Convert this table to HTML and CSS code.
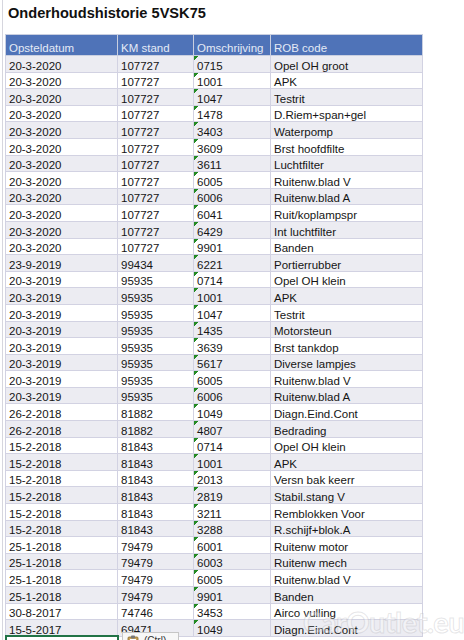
FILE: index.html
```html
<!DOCTYPE html>
<html lang="nl">
<head>
<meta charset="utf-8">
<title>Onderhoudshistorie 5VSK75</title>
<link rel="stylesheet" href="styles.css">
</head>
<body>
<div class="sheet">
  <h1 class="title">Onderhoudshistorie 5VSK75</h1>
  <table class="grid">
    <colgroup><col class="c1"><col class="c2"><col class="c3"><col class="c4"></colgroup>
    <thead>
      <tr class="head"><th>Opsteldatum</th><th>KM stand</th><th>Omschrijving</th><th>ROB code</th></tr>
    </thead>
    <tbody>
      <tr><td>20-3-2020</td><td>107727</td><td class="tx">0715</td><td>Opel OH groot</td></tr>
      <tr><td>20-3-2020</td><td>107727</td><td class="tx">1001</td><td>APK</td></tr>
      <tr><td>20-3-2020</td><td>107727</td><td class="tx">1047</td><td>Testrit</td></tr>
      <tr><td>20-3-2020</td><td>107727</td><td class="tx">1478</td><td>D.Riem+span+gel</td></tr>
      <tr><td>20-3-2020</td><td>107727</td><td class="tx">3403</td><td>Waterpomp</td></tr>
      <tr><td>20-3-2020</td><td>107727</td><td class="tx">3609</td><td>Brst hoofdfilte</td></tr>
      <tr><td>20-3-2020</td><td>107727</td><td class="tx">3611</td><td>Luchtfilter</td></tr>
      <tr><td>20-3-2020</td><td>107727</td><td class="tx">6005</td><td>Ruitenw.blad V</td></tr>
      <tr><td>20-3-2020</td><td>107727</td><td class="tx">6006</td><td>Ruitenw.blad A</td></tr>
      <tr><td>20-3-2020</td><td>107727</td><td class="tx">6041</td><td>Ruit/koplampspr</td></tr>
      <tr><td>20-3-2020</td><td>107727</td><td class="tx">6429</td><td>Int luchtfilter</td></tr>
      <tr><td>20-3-2020</td><td>107727</td><td class="tx">9901</td><td>Banden</td></tr>
      <tr><td>23-9-2019</td><td>99434</td><td class="tx">6221</td><td>Portierrubber</td></tr>
      <tr><td>20-3-2019</td><td>95935</td><td class="tx">0714</td><td>Opel OH klein</td></tr>
      <tr><td>20-3-2019</td><td>95935</td><td class="tx">1001</td><td>APK</td></tr>
      <tr><td>20-3-2019</td><td>95935</td><td class="tx">1047</td><td>Testrit</td></tr>
      <tr><td>20-3-2019</td><td>95935</td><td class="tx">1435</td><td>Motorsteun</td></tr>
      <tr><td>20-3-2019</td><td>95935</td><td class="tx">3639</td><td>Brst tankdop</td></tr>
      <tr><td>20-3-2019</td><td>95935</td><td class="tx">5617</td><td>Diverse lampjes</td></tr>
      <tr><td>20-3-2019</td><td>95935</td><td class="tx">6005</td><td>Ruitenw.blad V</td></tr>
      <tr><td>20-3-2019</td><td>95935</td><td class="tx">6006</td><td>Ruitenw.blad A</td></tr>
      <tr><td>26-2-2018</td><td>81882</td><td class="tx">1049</td><td>Diagn.Eind.Cont</td></tr>
      <tr><td>26-2-2018</td><td>81882</td><td class="tx">4807</td><td>Bedrading</td></tr>
      <tr><td>15-2-2018</td><td>81843</td><td class="tx">0714</td><td>Opel OH klein</td></tr>
      <tr><td>15-2-2018</td><td>81843</td><td class="tx">1001</td><td>APK</td></tr>
      <tr><td>15-2-2018</td><td>81843</td><td class="tx">2013</td><td>Versn bak keerr</td></tr>
      <tr><td>15-2-2018</td><td>81843</td><td class="tx">2819</td><td>Stabil.stang V</td></tr>
      <tr><td>15-2-2018</td><td>81843</td><td class="tx">3211</td><td>Remblokken Voor</td></tr>
      <tr><td>15-2-2018</td><td>81843</td><td class="tx">3288</td><td>R.schijf+blok.A</td></tr>
      <tr><td>25-1-2018</td><td>79479</td><td class="tx">6001</td><td>Ruitenw motor</td></tr>
      <tr><td>25-1-2018</td><td>79479</td><td class="tx">6003</td><td>Ruitenw mech</td></tr>
      <tr><td>25-1-2018</td><td>79479</td><td class="tx">6005</td><td>Ruitenw.blad V</td></tr>
      <tr><td>25-1-2018</td><td>79479</td><td class="tx">9901</td><td>Banden</td></tr>
      <tr><td>30-8-2017</td><td>74746</td><td class="tx">3453</td><td>Airco vulling</td></tr>
      <tr><td>15-5-2017</td><td>69471</td><td class="tx">1049</td><td>Diagn.Eind.Cont</td></tr>
    </tbody>
  </table>
  <div class="selection"></div>
  <div class="paste">
    <svg class="clip" width="12" height="13" viewBox="0 0 12 13">
      <rect x="1" y="2" width="10" height="11" rx="1" fill="#c9a25a" stroke="#8a6a2c" stroke-width="0.8"/>
      <rect x="3" y="4" width="6" height="8" fill="#fff"/>
      <rect x="4" y="0.5" width="4" height="3" rx="0.8" fill="#777"/>
    </svg>
    <span class="ctrl">(Ctrl)</span>
  </div>
  <div class="watermark">CarOutlet.eu</div>
</div>
</body>
</html>
```
FILE: styles.css
```css
* { box-sizing: border-box; }
html, body { margin: 0; padding: 0; background: #ffffff; }
body {
  font-family: "Liberation Sans", Arial, sans-serif;
  color: #151515;
  width: 464px;
  height: 640px;
  overflow: hidden;
}
.sheet {
  position: relative;
  height: 640px;
  overflow: hidden;
  border-left: 1px solid #d6d6de;
  margin-left: 2px;
  padding-left: 2px;
}
.title {
  margin: 0;
  height: 34px;
  padding: 4px 0 0 3px;
  font-size: 14.6px;
  font-weight: bold;
  line-height: 18px;
  color: #111;
}
.grid {
  border-collapse: collapse;
  table-layout: fixed;
  width: 417px;
  font-size: 11.5px;
}
.c1 { width: 112px; }
.c2 { width: 76px; }
.c3 { width: 77px; }
.c4 { width: 152px; }
.grid th, .grid td {
  border: 1px solid #d2d2e2;
  padding: 0 0 0 3px;
  text-align: left;
  vertical-align: bottom;
  white-space: nowrap;
  overflow: hidden;
  line-height: 11px;
}
.grid td { padding-bottom: 0; }
.head { height: 21px; background: #4f73b8; }
.head th {
  font-weight: normal;
  color: #e4eaf6;
  border-color: #c9cfe0;
  padding-bottom: 1px;
}
tbody tr { height: 16.6px; }
tbody tr:nth-child(odd) { background: #ececf2; }
tbody tr:nth-child(even) { background: #ffffff; }
.tx {
  background-image: linear-gradient(135deg, #238a23 0, #238a23 3px, transparent 3px);
  background-size: 6px 6px;
  background-repeat: no-repeat;
  background-position: 0 0;
}
.selection {
  position: absolute;
  left: 2px;
  top: 635px;
  width: 114px;
  height: 20px;
  border: 2px solid #217346;
}
.paste {
  position: absolute;
  left: 119px;
  top: 632px;
  width: 57px;
  height: 20px;
  background: #f7f7f7;
  border: 1px solid #c6c6c6;
  display: flex;
  align-items: flex-start;
  gap: 5px;
  padding: 2px 0 0 4px;
  font-size: 10px;
  color: #333;
}
.clip { display: block; }
.watermark {
  position: absolute;
  left: 300px;
  top: 604px;
  font-family: "Lato", "Liberation Sans", sans-serif;
  font-size: 29px;
  font-weight: bold;
  color: rgba(255, 255, 255, 0.35);
  -webkit-text-stroke: 1px rgba(170, 170, 175, 0.3);
  letter-spacing: -0.5px;
  white-space: nowrap;
  pointer-events: none;
}
```
